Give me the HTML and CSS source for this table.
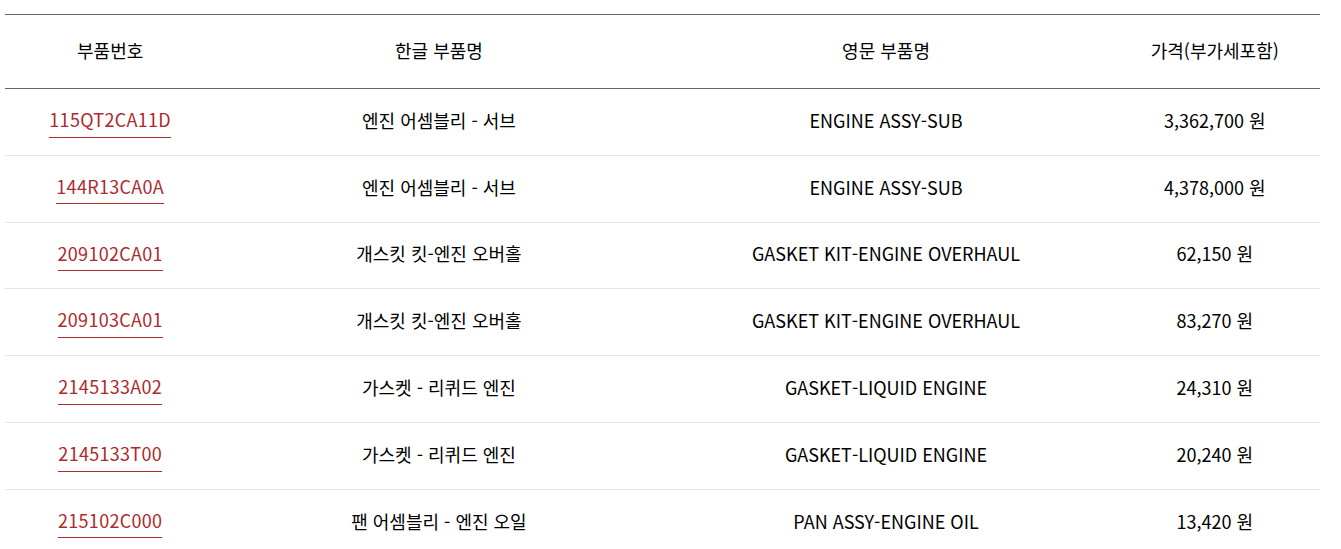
FILE: index.html
```html
<!DOCTYPE html>
<html lang="ko">
<head>
<meta charset="utf-8">
<link rel="stylesheet" href="styles.css">
</head>
<body>
<div class="wrap">
<table class="parts">
  <colgroup>
    <col class="c1"><col class="c2"><col class="c3"><col class="c4">
  </colgroup>
  <thead>
    <tr><th>부품번호</th><th>한글 부품명</th><th>영문 부품명</th><th>가격(부가세포함)</th></tr>
  </thead>
  <tbody>
    <tr><td><a class="pn" href="#">115QT2CA11D</a></td><td>엔진 어셈블리 - 서브</td><td>ENGINE ASSY-SUB</td><td>3,362,700 원</td></tr>
    <tr><td><a class="pn" href="#">144R13CA0A</a></td><td>엔진 어셈블리 - 서브</td><td>ENGINE ASSY-SUB</td><td>4,378,000 원</td></tr>
    <tr><td><a class="pn" href="#">209102CA01</a></td><td>개스킷 킷-엔진 오버홀</td><td>GASKET KIT-ENGINE OVERHAUL</td><td>62,150 원</td></tr>
    <tr><td><a class="pn" href="#">209103CA01</a></td><td>개스킷 킷-엔진 오버홀</td><td>GASKET KIT-ENGINE OVERHAUL</td><td>83,270 원</td></tr>
    <tr><td><a class="pn" href="#">2145133A02</a></td><td>가스켓 - 리퀴드 엔진</td><td>GASKET-LIQUID ENGINE</td><td>24,310 원</td></tr>
    <tr><td><a class="pn" href="#">2145133T00</a></td><td>가스켓 - 리퀴드 엔진</td><td>GASKET-LIQUID ENGINE</td><td>20,240 원</td></tr>
    <tr><td><a class="pn" href="#">215102C000</a></td><td>팬 어셈블리 - 엔진 오일</td><td>PAN ASSY-ENGINE OIL</td><td>13,420 원</td></tr>
  </tbody>
</table>
</div>
</body>
</html>
```
FILE: styles.css
```css
html, body {
  margin: 0;
  padding: 0;
  background: #fff;
}
body {
  font-family: "Noto Sans CJK KR", "Noto Sans", sans-serif;
  font-size: 18px;
  color: #000;
}
.wrap {
  padding: 14px 21px 0 5px;
}
.parts {
  width: 100%;
  border-collapse: collapse;
  table-layout: fixed;
  border-top: 1px solid #666;
}
.c1 { width: 16%; }
.c2 { width: 34%; }
.c3 { width: 34%; }
.c4 { width: 16%; }
.parts th {
  font-weight: 400;
  height: 69px;
  padding: 0 0 4px;
  text-align: center;
  border-bottom: 1px solid #666;
}
.parts td {
  font-weight: 400;
  height: 61.8px;
  padding: 0 0 4px;
  text-align: center;
  border-bottom: 1px solid #e5e5e5;
}
.pn {
  color: #ad2a2d;
  text-decoration: none;
  display: inline-block;
  line-height: 1.2;
  padding: 7px 0 6px;
  border-bottom: 1px solid #ad2a2d;
  letter-spacing: 0.3px;
}
```
